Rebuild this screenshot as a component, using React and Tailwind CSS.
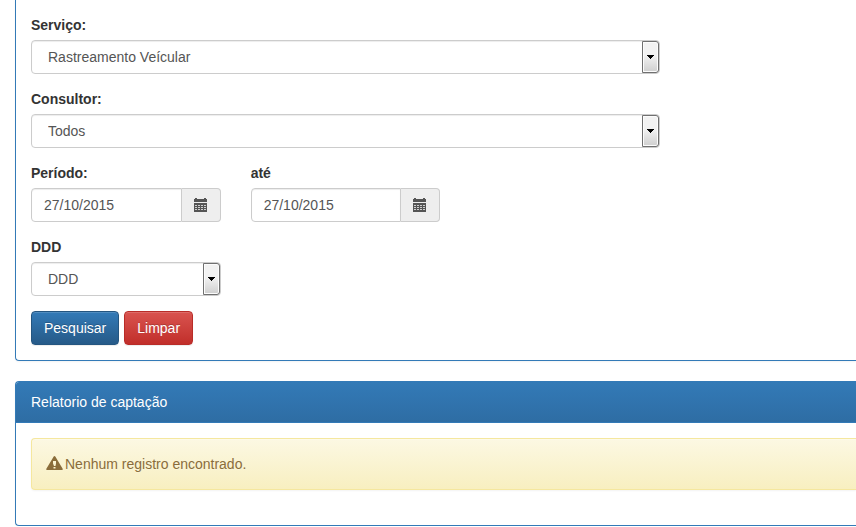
import React from "react";

const fieldBox =
  "h-[34px] w-full min-w-0 border border-[#ccc] bg-white text-sm text-[#555] shadow-[inset_0_1px_1px_rgba(0,0,0,0.075)] outline-none";

function Label({ htmlFor, children }) {
  return (
    <label htmlFor={htmlFor} className="mb-[5px] block text-sm leading-5 font-bold text-[#333]">
      {children}
    </label>
  );
}

function SelectField({ id, label, option }) {
  return (
    <div>
      <Label htmlFor={id}>{label}</Label>
      <div className="relative">
        <select id={id} className={`${fieldBox} block appearance-none rounded pr-6 pl-4`}>
          <option>{option}</option>
        </select>
        <span className="pointer-events-none absolute inset-y-px right-px flex w-[17px] items-center justify-center rounded-r-[3px] border border-[#707070] bg-linear-to-b from-[#f2f2f2] from-45% to-[#cfcfcf] shadow-[inset_0_0_0_1px_#fcfcfc]">
          <svg width="7" height="4" viewBox="0 0 7 4" shapeRendering="crispEdges" aria-hidden="true">
            <path d="M0 0h7v1H6v1H5v1H4v1H3V3H2V2H1V1H0z" fill="#000" />
          </svg>
        </span>
      </div>
    </div>
  );
}

function CalendarIcon() {
  return (
    <svg width="14" height="14" viewBox="0 0 14 14" shapeRendering="crispEdges" aria-hidden="true">
      <path d="M1 0h2v1h7V0h2v1h1v3H0V1h1zM0 5h13v9H0z" fill="#555" />
      <path
        d="M1 7h2v1H1zM4 7h2v1H4zM7 7h2v1H7zM10 7h2v1h-2zM1 9h2v1H1zM4 9h2v1H4zM7 9h2v1H7zM10 9h2v1h-2zM1 11h2v1H1zM4 11h2v1H4zM7 11h2v1H7zM10 11h2v1h-2z"
        fill="#d0d0d0"
      />
    </svg>
  );
}

function DateField({ id, label }) {
  return (
    <div>
      <Label htmlFor={id}>{label}</Label>
      <div className="flex">
        <input id={id} type="text" defaultValue="27/10/2015" className={`${fieldBox} rounded-l px-3`} />
        <span className="flex w-[39px] shrink-0 items-center justify-center rounded-r border border-l-0 border-[#ccc] bg-[#eee]">
          <CalendarIcon />
        </span>
      </div>
    </div>
  );
}

const buttonBase =
  "h-[34px] rounded border px-3 text-sm leading-5 text-white [text-shadow:0_-1px_0_rgba(0,0,0,0.2)] shadow-[inset_0_1px_0_rgba(255,255,255,0.15),0_1px_1px_rgba(0,0,0,0.075)]";

export default function App() {
  return (
    <main className="bg-white pl-[15px] font-['Liberation_Sans',Arial,sans-serif] text-sm leading-5 text-[#333]">
      <section className="rounded-bl border-b border-l border-[#337ab7] p-[15px] shadow-[0_1px_2px_rgba(0,0,0,0.05)]">
        <form className="flex max-w-[629px] flex-col gap-[15px]" onSubmit={(e) => e.preventDefault()}>
          <SelectField id="servico" label="Serviço:" option="Rastreamento Veícular" />
          <SelectField id="consultor" label="Consultor:" option="Todos" />
          <div className="grid grid-cols-3 gap-[30px]">
            <DateField id="inicio" label="Período:" />
            <DateField id="fim" label="até" />
          </div>
          <div className="grid grid-cols-3 gap-[30px]">
            <SelectField id="ddd" label="DDD" option="DDD" />
          </div>
          <div className="flex gap-[5px]">
            <button
              type="submit"
              className={`${buttonBase} border-[#245580] bg-linear-to-b from-[#337ab7] to-[#265a88]`}
            >
              Pesquisar
            </button>
            <button
              type="reset"
              className={`${buttonBase} border-[#b92c28] bg-linear-to-b from-[#d9534f] to-[#c12e2a]`}
            >
              Limpar
            </button>
          </div>
        </form>
      </section>

      <section className="mt-5 rounded-l border-y border-l border-[#337ab7] shadow-[0_1px_2px_rgba(0,0,0,0.05)]">
        <h2 className="rounded-tl-[3px] border-b border-[#337ab7] bg-linear-to-b from-[#337ab7] to-[#2e6da4] px-[15px] py-2.5 text-white">
          Relatorio de captação
        </h2>
        <div className="pt-[15px] pb-[35px] pl-[15px]">
          <div
            role="alert"
            className="flex items-center gap-0.5 rounded-l border-y border-l border-[#f5e79e] bg-linear-to-b from-[#fcf8e3] to-[#f8efc0] p-[15px] text-[#8a6d3b] shadow-[inset_0_1px_0_rgba(255,255,255,0.25),0_1px_2px_rgba(0,0,0,0.05)] [text-shadow:0_1px_0_rgba(255,255,255,0.2)]"
          >
            <svg width="17" height="20" viewBox="0 0 17 20" className="-ml-px" aria-hidden="true">
              <path
                fillRule="evenodd"
                fill="#8a6d3b"
                d="M7.700 2.500Q8.500 1.600 9.300 2.500L16.800 15Q17 16 16 16H1Q0 16 .2 15zM7 7v2.500L8 12h1.500l.5-2.500V7zM7.500 13v1.500h2V13z"
              />
            </svg>
            <span>Nenhum registro encontrado.</span>
          </div>
        </div>
      </section>
    </main>
  );
}
